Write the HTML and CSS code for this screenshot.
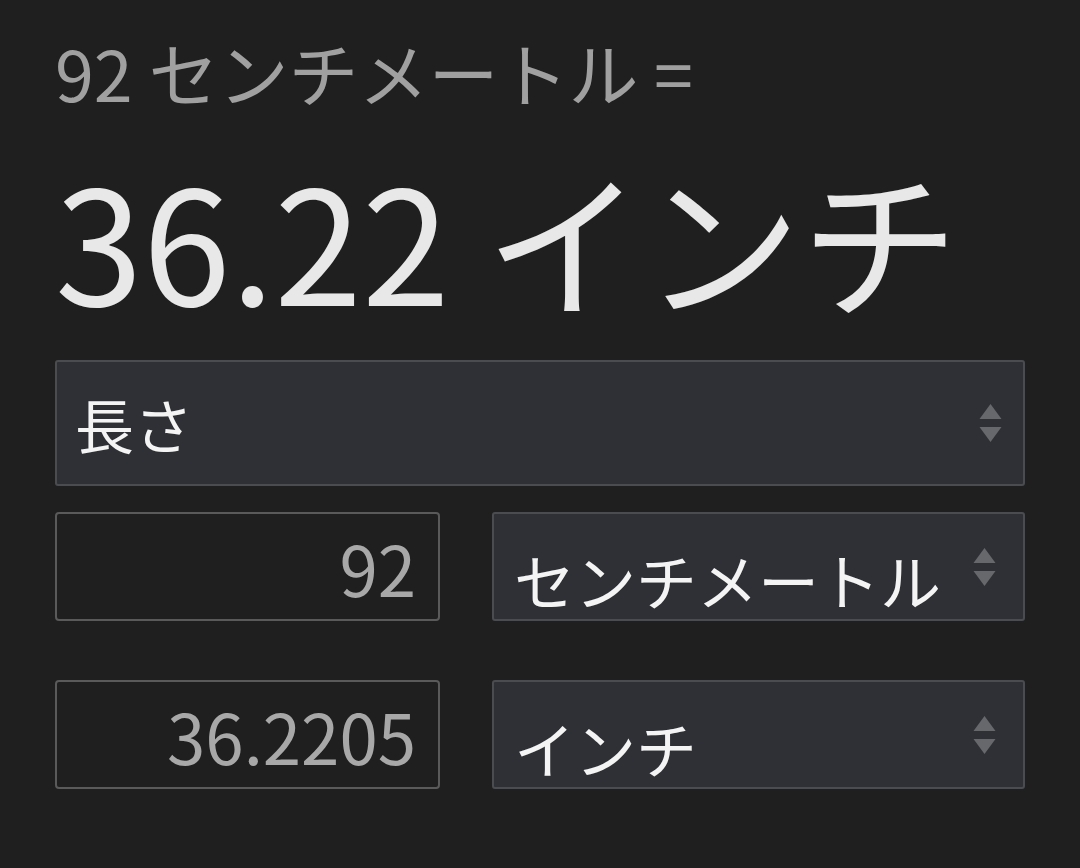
FILE: index.html
```html
<!DOCTYPE html>
<html lang="ja">
<head>
<meta charset="utf-8">
<link rel="stylesheet" href="styles.css">
</head>
<body>
<div class="conv">
  <div class="header">92 センチメートル =</div>
  <div class="result">36.22 インチ</div>
  <div class="select wide">
    <span class="label">長さ</span>
    <svg class="arrows" viewBox="0 0 24 40"><polygon points="12,1 23,16 1,16"/><polygon points="1,24 23,24 12,39"/></svg>
  </div>
  <div class="row first">
    <div class="input">92</div>
    <div class="select unit">
      <span class="label">センチメートル</span>
      <svg class="arrows" viewBox="0 0 24 40"><polygon points="12,1 23,16 1,16"/><polygon points="1,24 23,24 12,39"/></svg>
    </div>
  </div>
  <div class="row">
    <div class="input">36.2205</div>
    <div class="select unit">
      <span class="label">インチ</span>
      <svg class="arrows" viewBox="0 0 24 40"><polygon points="12,1 23,16 1,16"/><polygon points="1,24 23,24 12,39"/></svg>
    </div>
  </div>
</div>
</body>
</html>
```
FILE: styles.css
```css
html, body {
  margin: 0;
  padding: 0;
  background: #1f1f1f;
}
body {
  font-family: "Noto Sans CJK JP", "Noto Sans", sans-serif;
  width: 1080px;
  height: 868px;
  overflow: hidden;
}
.conv {
  padding: 32px 0 0 55px;
  width: 970px;
}
.header {
  font-size: 70px;
  line-height: 80px;
  color: #a0a0a0;
  white-space: nowrap;
}
.result {
  margin-top: 40px;
  font-size: 158px;
  line-height: 172px;
  color: #e8e8e8;
  white-space: nowrap;
}
.select {
  box-sizing: border-box;
  display: flex;
  align-items: center;
  background: #2e3035;
  border: 2px solid #4a4c50;
  border-radius: 3px;
  padding: 0 20px 0 18px;
  color: #f4f4f4;
  font-size: 59px;
}
.select.wide {
  margin-top: 36px;
  height: 126px;
}
.select.unit {
  height: 109px;
  padding-left: 20px;
  padding-right: 26px;
  font-size: 61px;
}
.select.unit .label {
  padding-top: 26px;
}
.label {
  white-space: nowrap;
}
.arrows {
  margin-left: auto;
  width: 25px;
  height: 40px;
  fill: #66686c;
  flex: none;
}
.row {
  display: grid;
  grid-template-columns: 385px 533px;
  column-gap: 52px;
  margin-top: 59px;
}
.row.first {
  margin-top: 26px;
}
.input {
  box-sizing: border-box;
  height: 109px;
  border: 2px solid #5a5a5a;
  border-radius: 4px;
  display: flex;
  align-items: center;
  justify-content: flex-end;
  padding-right: 22px;
  font-size: 69px;
  color: #a8a8a8;
}
```
